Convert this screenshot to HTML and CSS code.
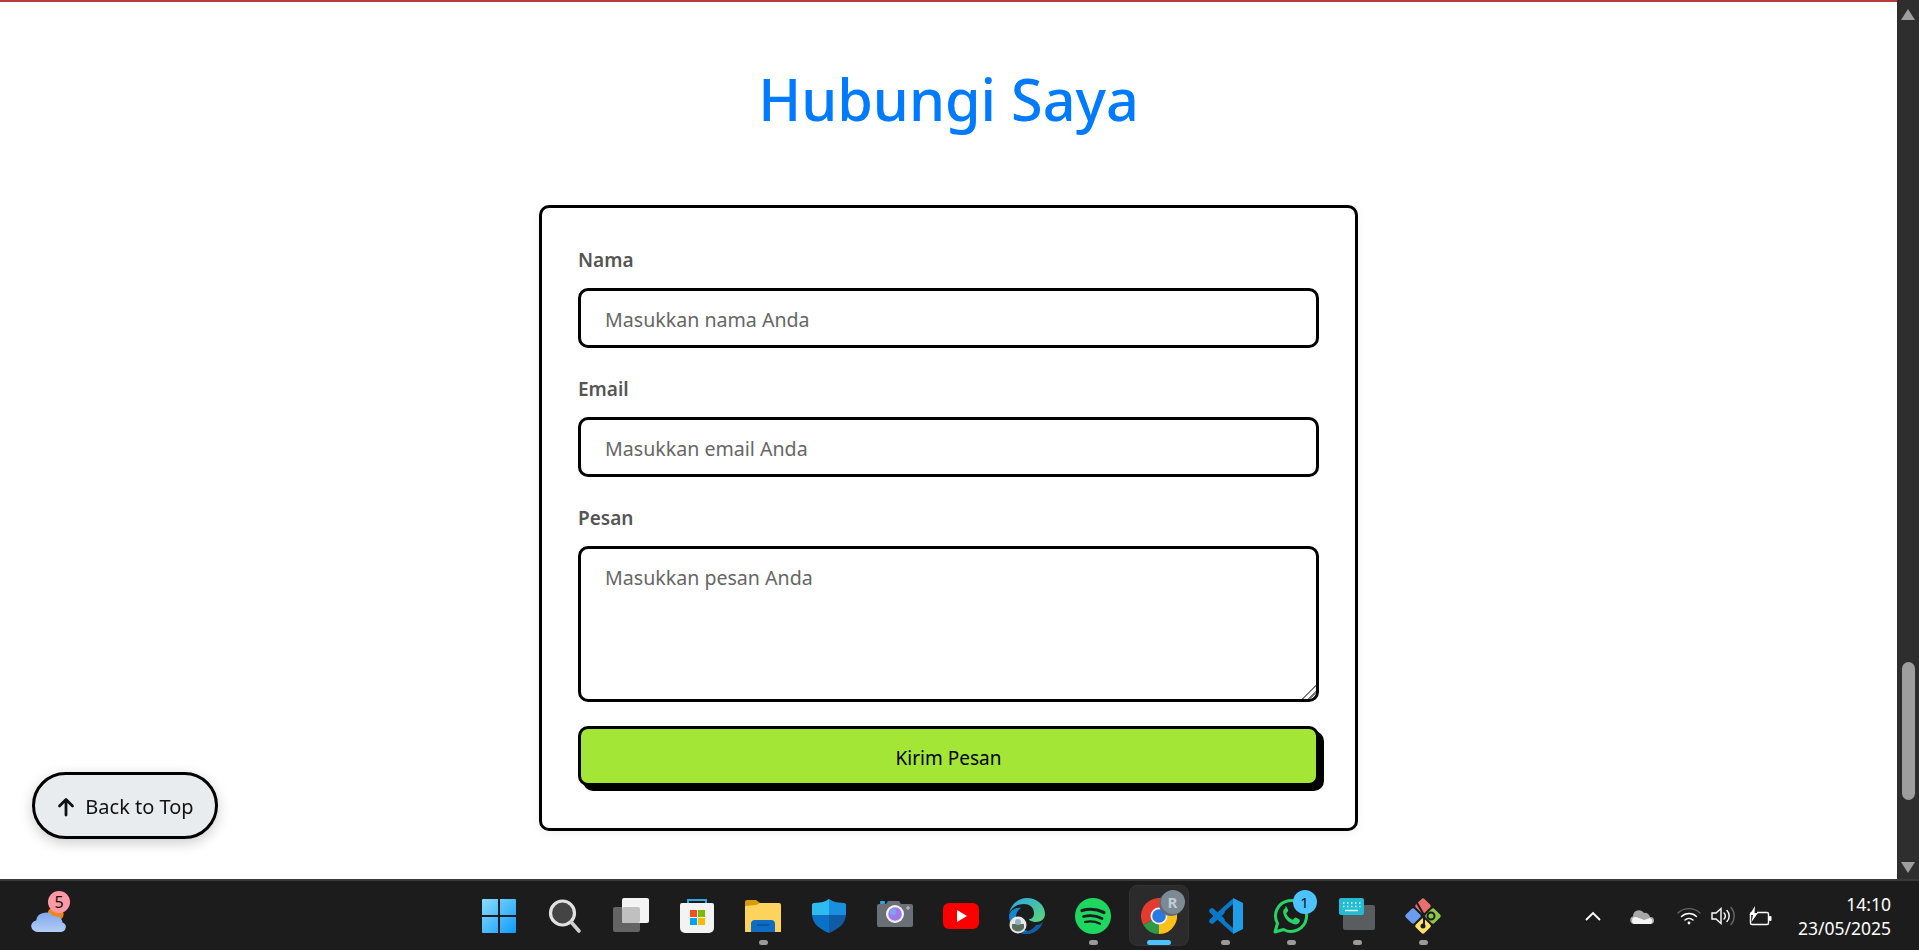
FILE: index.html
```html
<!DOCTYPE html>
<html lang="en">
<head>
    <meta charset="UTF-8">
    <meta name="viewport" content="width=device-width, initial-scale=1.0">
    <title>Hubungi Saya</title>
    <link rel="stylesheet" href="styles.css">
</head>
<body>
    <div class="window">
        <main class="page">
            <h1 class="title">Hubungi Saya</h1>
            <form class="contact-card">
                <label class="field-label" for="nama">Nama</label>
                <input class="field" type="text" id="nama" placeholder="Masukkan nama Anda">

                <label class="field-label" for="email">Email</label>
                <input class="field" type="email" id="email" placeholder="Masukkan email Anda">

                <label class="field-label" for="pesan">Pesan</label>
                <textarea class="field field-area" id="pesan" placeholder="Masukkan pesan Anda"></textarea>

                <button class="send-btn" type="button">Kirim Pesan</button>
            </form>
            <button class="back-top" type="button">
                <svg class="back-arrow" width="20" height="20" viewBox="0 0 20 20" fill="none" stroke="#111" stroke-width="2.800" stroke-linecap="round" stroke-linejoin="round"><path d="M10 18V3M3.500 9L10 2.500 16.500 9"/></svg>
                Back to Top
            </button>
        </main>
        <aside class="scrollbar">
            <span class="arrow-up"></span>
            <span class="thumb"></span>
            <span class="arrow-down"></span>
        </aside>
    </div>

    <footer class="taskbar">
        <div class="weather">
            <svg width="36" height="36" viewBox="1 0 31 36" preserveAspectRatio="none">
                <defs><linearGradient id="cloudG" x1="0" y1="0" x2="0" y2="1"><stop offset="0" stop-color="#7fa8ec"/><stop offset="1" stop-color="#b4cdf5"/></linearGradient></defs>
                <circle cx="23" cy="13" r="7" fill="#f0851f"/>
                <path d="M8 31a6 6 0 0 1-1.500-11.800A8 8 0 0 1 21 15a7 7 0 0 1 8 6.500A5 5 0 0 1 27 31Z" fill="url(#cloudG)"/>
            </svg>
            <span class="badge badge-pink">5</span>
        </div>

        <div class="task-icons">
            <div class="task-item">
                <svg width="36" height="36" viewBox="0 0 36 36">
                    <defs><linearGradient id="winG" x1="0" y1="0" x2="1" y2="1"><stop offset="0" stop-color="#8adcff"/><stop offset="1" stop-color="#0f9bfa"/></linearGradient></defs>
                    <path d="M2 1h15v16H1V2a1 1 0 0 1 1-1ZM19 1h15a1 1 0 0 1 1 1v15H19ZM1 19h16v16H2a1 1 0 0 1-1-1ZM19 19h16v15a1 1 0 0 1-1 1H19Z" fill="url(#winG)"/>
                </svg>
            </div>
            <div class="task-item">
                <svg width="36" height="36" viewBox="0 0 36 36">
                    <circle cx="15.500" cy="15" r="12" fill="#444" stroke="#e2e2e2" stroke-width="3.200"/>
                    <path d="M24.500 24.500L32 33" stroke="#d0d0d0" stroke-width="3.600" stroke-linecap="round"/>
                </svg>
            </div>
            <div class="task-item">
                <svg width="36" height="36" viewBox="0 0 36 36">
                    <rect x="0" y="9" width="27" height="25" rx="2" fill="#646464"/>
                    <rect x="9" y="0" width="27" height="25" rx="2" fill="#f4f4f4"/>
                    <rect x="9" y="9" width="18" height="16" rx="2" fill="#c0c0c0"/>
                </svg>
            </div>
            <div class="task-item">
                <svg width="36" height="36" viewBox="0 0 36 36">
                    <path d="M9 7V2h18v5" fill="none" stroke="#2aa8e8" stroke-width="2"/>
                    <path d="M3 5h30a2 2 0 0 1 2 2v23a5 5 0 0 1-5 5H6a5 5 0 0 1-5-5V7a2 2 0 0 1 2-2Z" fill="#f3f3f3"/>
                    <rect x="11" y="12" width="7" height="7" fill="#f25022"/>
                    <rect x="19" y="12" width="7" height="7" fill="#7fba00"/>
                    <rect x="11" y="20" width="7" height="7" fill="#00a4ef"/>
                    <rect x="19" y="20" width="7" height="7" fill="#ffb900"/>
                </svg>
            </div>
            <div class="task-item has-dot">
                <svg width="36" height="36" viewBox="0 0 36 36">
                    <path d="M0 4a2 2 0 0 1 2-2h9l4 3v3H0Z" fill="#d69c0e"/>
                    <path d="M0 8l11-1 4-2h19a2 2 0 0 1 2 2v27H0Z" fill="#fcd35c"/>
                    <path d="M6 34v-8a4 4 0 0 1 4-4h16a4 4 0 0 1 4 4v8Z" fill="#0f6cc4"/>
                    <path d="M12 27h12" stroke="#0a4e92" stroke-width="1.500"/>
                </svg>
                <span class="dot"></span>
            </div>
            <div class="task-item">
                <svg width="36" height="36" viewBox="0 0 36 36">
                    <path d="M18 1c4 3 9 4 15 4 1 0 2 1 2 2v9c0 9-7 15-17 19Z" fill="#0f5ba6"/>
                    <path d="M18 1C14 4 9 5 3 5 2 5 1 6 1 7v9c0 9 7 15 17 19Z" fill="#0a72c6"/>
                    <path d="M18 1c-4 3-9 4-15 4-1 0-2 1-2 2v10h17Z" fill="#2ebcf0"/>
                    <path d="M18 1c4 3 9 4 15 4 1 0 2 1 2 2v10H18Z" fill="#1a8fe0"/>
                </svg>
            </div>
            <div class="task-item">
                <svg width="36" height="36" viewBox="0 0 36 36">
                    <path d="M2 6h7l2-3h11l2 3h10a2 2 0 0 1 2 2v19a2 2 0 0 1-2 2H2a2 2 0 0 1-2-2V8a2 2 0 0 1 2-2Z" fill="#6a7076"/>
                    <rect x="3" y="3" width="5" height="3" rx="1" fill="#2ba6de"/>
                    <circle cx="18" cy="16" r="9" fill="#f3f3f3"/>
                    <circle cx="18" cy="16" r="6.800" fill="#9f7ae8"/>
                    <circle cx="16" cy="14" r="3.200" fill="#7ea4f0"/>
                    <path d="M31 8v4M29 10h4" stroke="#c5c8cc" stroke-width="1"/>
                </svg>
            </div>
            <div class="task-item">
                <svg width="36" height="36" viewBox="0 0 36 36">
                    <rect x="0" y="5" width="36" height="26" rx="6" fill="#fb0000"/>
                    <path d="M14 12l10 6-10 6Z" fill="#fff"/>
                </svg>
            </div>
            <div class="task-item">
                <svg width="36" height="36" viewBox="0 0 36 36">
                    <defs>
                        <linearGradient id="edgeG" x1="0" y1="0" x2="1" y2="1"><stop offset="0" stop-color="#2aa7e4"/><stop offset="1" stop-color="#5ed677"/></linearGradient>
                    </defs>
                    <path d="M0 17C1 7 9 0 18 0c10 0 18 7 18 16 0 5-4 8-9 8-4 0-7-2-7-3 3 0 5-2 5-6C25 9 20 6 15 6 7 6 1 11 0 17Z" fill="url(#edgeG)"/>
                    <path d="M0 17c2-5 7-8 12-7-3 2-5 5-5 9 0 7 6 14 16 15-2 1-4 2-6 2C7 36 0 27 0 17Z" fill="#1784d0"/>
                    <path d="M34 24c-2 6-8 12-16 12-3 0-6-1-8-3 6 2 13 0 17-6 3 0 5-1 7-3Z" fill="#0f5fa8"/>
                    <circle cx="9" cy="27" r="8.500" fill="#e8e8e8"/>
                    <path d="M3 26h12v4a7 7 0 0 1-12 0Z" fill="#5d6f5a"/>
                    <circle cx="9" cy="24" r="3" fill="#8fb0c9"/>
                </svg>
            </div>
            <div class="task-item has-dot">
                <svg width="36" height="36" viewBox="0 0 36 36">
                    <circle cx="18" cy="18" r="18" fill="#1ed760"/>
                    <path d="M7 12.500c7-2 15-1.500 22 2" fill="none" stroke="#1c1c1c" stroke-width="3.200" stroke-linecap="round"/>
                    <path d="M8.500 18.500c6-1.500 13-1 18.500 2" fill="none" stroke="#1c1c1c" stroke-width="2.700" stroke-linecap="round"/>
                    <path d="M10 24c5-1 10-.8 15 1.700" fill="none" stroke="#1c1c1c" stroke-width="2.200" stroke-linecap="round"/>
                </svg>
                <span class="dot"></span>
            </div>
            <div class="task-item task-active">
                <svg width="36" height="36" viewBox="0 0 36 36">
                    <path d="M18 18L2.400 27A18 18 0 0 1 33.600 9Z" fill="#e33b2e"/>
                    <path d="M18 18L33.600 9A18 18 0 0 1 18 36Z" fill="#fbc118"/>
                    <path d="M18 18L18 36A18 18 0 0 1 2.400 27Z" fill="#2f9a48"/>
                    <circle cx="18" cy="18" r="8.500" fill="#f4f4f4"/>
                    <circle cx="18" cy="18" r="6.800" fill="#2a78e4"/>
                </svg>
                <span class="badge badge-gray">R</span>
                <span class="dot dot-active"></span>
            </div>
            <div class="task-item has-dot">
                <svg width="36" height="36" viewBox="0 0 36 36">
                    <path d="M26 4L5 23" stroke="#0a78c8" stroke-width="5.500" stroke-linecap="round"/>
                    <path d="M5 13L26 32" stroke="#0a78c8" stroke-width="5.500" stroke-linecap="round"/>
                    <path d="M26 0l10 5v26l-10 5Z" fill="#1e9de8"/>
                    <path d="M26 6v24l-8-7-1-5 1-5Z" fill="#1c1c1c"/>
                </svg>
                <span class="dot"></span>
            </div>
            <div class="task-item has-dot">
                <svg width="36" height="36" viewBox="0 0 36 36">
                    <path d="M2 34l2.500-8.500A15.500 15.500 0 1 1 10.500 31.500Z" fill="none" stroke="#25d366" stroke-width="3" stroke-linejoin="round"/>
                    <path d="M12.500 10c-2 1-3 3-2 6 1.500 5 5 8.500 10 10 3 1 5 0 6-2 .500-1 .500-2 0-2.500l-3.500-2c-.700-.300-1.200 0-1.500.500l-1 1.300c-.500.500-1 .500-1.500.300-2.500-1-4.500-3-5.500-5.500-.200-.500-.200-1 .300-1.500l1-1c.500-.500.500-1 .300-1.500l-1.600-3.300c-.300-.500-1-.500-1.500-.300Z" fill="#25d366"/>
                </svg>
                <span class="badge badge-blue">1</span>
                <span class="dot"></span>
            </div>
            <div class="task-item has-dot">
                <svg width="36" height="36" viewBox="0 0 36 36">
                    <rect x="4" y="7" width="32" height="25" rx="2" fill="#5a5d60"/>
                    <rect x="0" y="0" width="25" height="17" rx="2" fill="#22bcd4"/>
                    <path d="M4 5h1.500M8 5h1.500M12 5h1.500M16 5h1.500M20 5h1.500M4 8.500h1.500M8 8.500h1.500M12 8.500h1.500M16 8.500h1.500M20 8.500h1.500" stroke="#dff7fb" stroke-width="1.500"/>
                    <path d="M6 12.500h13" stroke="#dff7fb" stroke-width="1.500"/>
                </svg>
                <span class="dot"></span>
            </div>
            <div class="task-item has-dot">
                <svg width="36" height="36" viewBox="0 0 36 36">
                    <rect x="12" y="2" width="12" height="12" rx="2" transform="rotate(45 18 8)" fill="#e96f6f"/>
                    <rect x="22" y="12" width="12" height="12" rx="2" transform="rotate(45 28 18)" fill="#8cc84b"/>
                    <rect x="12" y="22" width="12" height="12" rx="2" transform="rotate(45 18 28)" fill="#ffe16b"/>
                    <rect x="2" y="12" width="12" height="12" rx="2" transform="rotate(45 8 18)" fill="#6b9cf0"/>
                    <path d="M12 5L19 17M19 17v10" stroke="#1c1c1c" stroke-width="2"/>
                    <circle cx="26" cy="18" r="3.500" fill="none" stroke="#1c1c1c" stroke-width="2"/>
                    <circle cx="18" cy="28" r="2.500" fill="#1c1c1c"/>
                </svg>
                <span class="dot"></span>
            </div>
        </div>

        <div class="tray">
            <svg class="tray-chevron" width="16" height="10" viewBox="0 0 16 10" fill="none" stroke="#fff" stroke-width="1.900"><path d="M1 9l7-7 7 7"/></svg>
            <svg class="tray-cloud" width="24" height="16" viewBox="0 0 24 16">
                <path d="M4 16a4 4 0 0 1-1-7.800A6 6 0 0 1 14 5a5 5 0 0 1 6 4 3.500 3.500 0 0 1 1 7Z" fill="#a8a8a8"/>
                <path d="M4 16a4 4 0 0 1 0-7c4 0 7 2 10 3l6-2a3.500 3.500 0 0 1 1 6Z" fill="#f4f4f4"/>
            </svg>
            <svg class="tray-wifi" width="24" height="20" viewBox="0 0 24 20" fill="none" stroke-linecap="round">
                <path d="M1 7a16 16 0 0 1 22 0" stroke="#666" stroke-width="1.400"/>
                <path d="M4.500 10.500a11 11 0 0 1 15 0" stroke="#fff" stroke-width="1.500"/>
                <path d="M8 14a6 6 0 0 1 8 0" stroke="#fff" stroke-width="1.500"/>
                <circle cx="12" cy="17" r="1.400" fill="#fff"/>
            </svg>
            <svg class="tray-volume" width="24" height="20" viewBox="0 0 24 20" fill="none" stroke-width="1.400">
                <path d="M1 7h4l5-4.500v15L5 13H1Z" stroke="#fff"/>
                <path d="M13 7a4 4 0 0 1 0 6M16 4.500a8 8 0 0 1 0 11" stroke="#fff" stroke-linecap="round"/>
                <path d="M20 1.500a13 13 0 0 1 0 17" stroke="#666" stroke-linecap="round"/>
            </svg>
            <svg class="tray-battery" width="26" height="20" viewBox="0 0 26 20" fill="none" stroke="#fff" stroke-width="1.400">
                <path d="M6 6.500H5a1.500 1.500 0 0 0-1.500 1.500v9A1.500 1.500 0 0 0 5 18.500h15a1.500 1.500 0 0 0 1.500-1.500V8A1.500 1.500 0 0 0 20 6.500H10"/>
                <rect x="22" y="10" width="2.500" height="5" rx="1" fill="#fff" stroke="none"/>
                <path d="M8 0L2.500 9H6l-1.500 7L11 7H7.500Z" fill="#fff" stroke="none"/>
            </svg>
            <div class="clock">
                <span>14:10</span>
                <span>23/05/2025</span>
            </div>
        </div>
    </footer>
</body>
</html>
```

FILE: styles.css
```css
* {
    box-sizing: border-box;
}
html, body {
    height: 100%;
}
body {
    margin: 0;
    display: flex;
    flex-direction: column;
    overflow: hidden;
    background-color: #fff;
    font-family: "Noto Sans", "Open Sans", sans-serif;
}
.window {
    flex: 1;
    display: flex;
    min-height: 0;
}
.page {
    flex: 1;
    border-top: 2px solid #b83a3a;
    padding-top: 58px;
    display: flex;
    flex-direction: column;
    align-items: center;
}
.title {
    margin: 0 0 67px;
    font-size: 57.5px;
    font-weight: 500;
    line-height: 78px;
    color: #007bff;
}
.contact-card {
    width: 819px;
    height: 626px;
    padding: 36px;
    border: 3px solid #000;
    border-radius: 10px;
    background: #fff;
    box-shadow: 0 2px 10px rgba(0, 0, 0, 0.06);
    display: flex;
    flex-direction: column;
}
.field-label {
    height: 30px;
    margin-bottom: 14px;
    font-size: 19px;
    line-height: 32px;
    font-weight: 600;
    color: #555;
}
.field {
    display: block;
    width: 100%;
    height: 60px;
    margin-bottom: 25px;
    padding: 2px 24px 0;
    border: 3px solid #000;
    border-radius: 10px;
    background: #fff;
    font-family: inherit;
    font-size: 19.6px;
    outline: none;
}
.field::placeholder {
    color: #666;
    opacity: 1;
}
.field-area {
    height: 156px;
    margin-bottom: 24px;
    padding-top: 15px;
    padding-bottom: 12px;
    line-height: 27px;
}
.field-area::-webkit-resizer {
    background: linear-gradient(135deg, transparent 50%, #777 50%, #777 58%, transparent 58%, transparent 72%, #777 72%, #777 80%, transparent 80%);
}
.send-btn {
    flex: none;
    height: 60px;
    padding-top: 5px;
    border: 3px solid #000;
    border-radius: 10px;
    background-color: #a4e635;
    box-shadow: 5px 5px 0 #000;
    color: #000;
    font-family: inherit;
    font-size: 19px;
    cursor: pointer;
}
.back-top {
    position: fixed;
    left: 32px;
    top: 772px;
    width: 186px;
    height: 67px;
    padding: 2px 0 0;
    display: flex;
    align-items: center;
    justify-content: center;
    gap: 9px;
    border: 3px solid #000;
    border-radius: 34px;
    background-color: #e9ecef;
    box-shadow: 0 4px 14px rgba(0, 0, 0, 0.2);
    color: #111;
    font-family: inherit;
    font-size: 20px;
    cursor: pointer;
}
.back-arrow {
    flex: none;
}
.scrollbar {
    width: 22px;
    background-color: #2e2e2e;
    display: flex;
    flex-direction: column;
    align-items: center;
    padding: 9px 0 6px;
}
.arrow-up, .arrow-down {
    width: 0;
    height: 0;
    border-left: 7px solid transparent;
    border-right: 7px solid transparent;
}
.arrow-up {
    border-bottom: 11px solid #9e9e9e;
}
.arrow-down {
    border-top: 11px solid #9e9e9e;
    margin-top: 62px;
}
.thumb {
    width: 13px;
    height: 138px;
    margin-top: 642px;
    border-radius: 7px;
    background-color: #9e9e9e;
}
.taskbar {
    height: 71px;
    flex: none;
    position: relative;
    display: flex;
    align-items: center;
    justify-content: center;
    background-color: #1c1c1c;
    border-top: 2px solid #3a3a3a;
}
.weather {
    position: absolute;
    left: 30px;
    top: 20px;
    width: 36px;
    height: 36px;
}
.task-icons {
    display: flex;
    margin-left: 2px;
}
.task-item {
    position: relative;
    width: 66px;
    height: 69px;
    display: flex;
    align-items: center;
    justify-content: center;
}
.task-active::before {
    content: "";
    position: absolute;
    left: 3px;
    right: 3px;
    top: 4px;
    bottom: 4px;
    border-radius: 8px;
    background-color: #2b2b2b;
    border: 1px solid #333;
}
.task-item svg {
    position: relative;
}
.dot {
    position: absolute;
    bottom: 5px;
    left: 50%;
    width: 9px;
    height: 5px;
    margin-left: -4px;
    border-radius: 3px;
    background-color: #9a9a9a;
}
.dot-active {
    width: 24px;
    margin-left: -12px;
    background-color: #4cc2ff;
}
.badge {
    position: absolute;
    width: 24px;
    height: 24px;
    border-radius: 50%;
    display: flex;
    align-items: center;
    justify-content: center;
    font-size: 15px;
    line-height: 1;
    color: #111;
}
.badge-pink {
    left: 18px;
    top: -10px;
    width: 22px;
    height: 22px;
    font-size: 16px;
    background-color: #ff99a4;
}
.badge-gray {
    right: 7px;
    top: 9px;
    background-color: #7c8a96;
    color: #c4ccd2;
    font-weight: 700;
    box-shadow: -2px 2px 0 #5f6b75;
}
.badge-blue {
    right: 7px;
    top: 9px;
    background-color: #4cc2ff;
}
.tray {
    position: absolute;
    right: 28px;
    top: 0;
    height: 69px;
    display: flex;
    align-items: center;
    color: #fff;
}
.tray-chevron {
    margin-right: 29px;
}
.tray-cloud {
    margin-right: 23px;
}
.tray-wifi {
    margin-right: 10px;
}
.tray-volume {
    margin-right: 12px;
}
.tray-battery {
    margin-right: 25px;
}
.clock {
    display: flex;
    flex-direction: column;
    align-items: flex-end;
    font-size: 17.5px;
    line-height: 24px;
}
```
